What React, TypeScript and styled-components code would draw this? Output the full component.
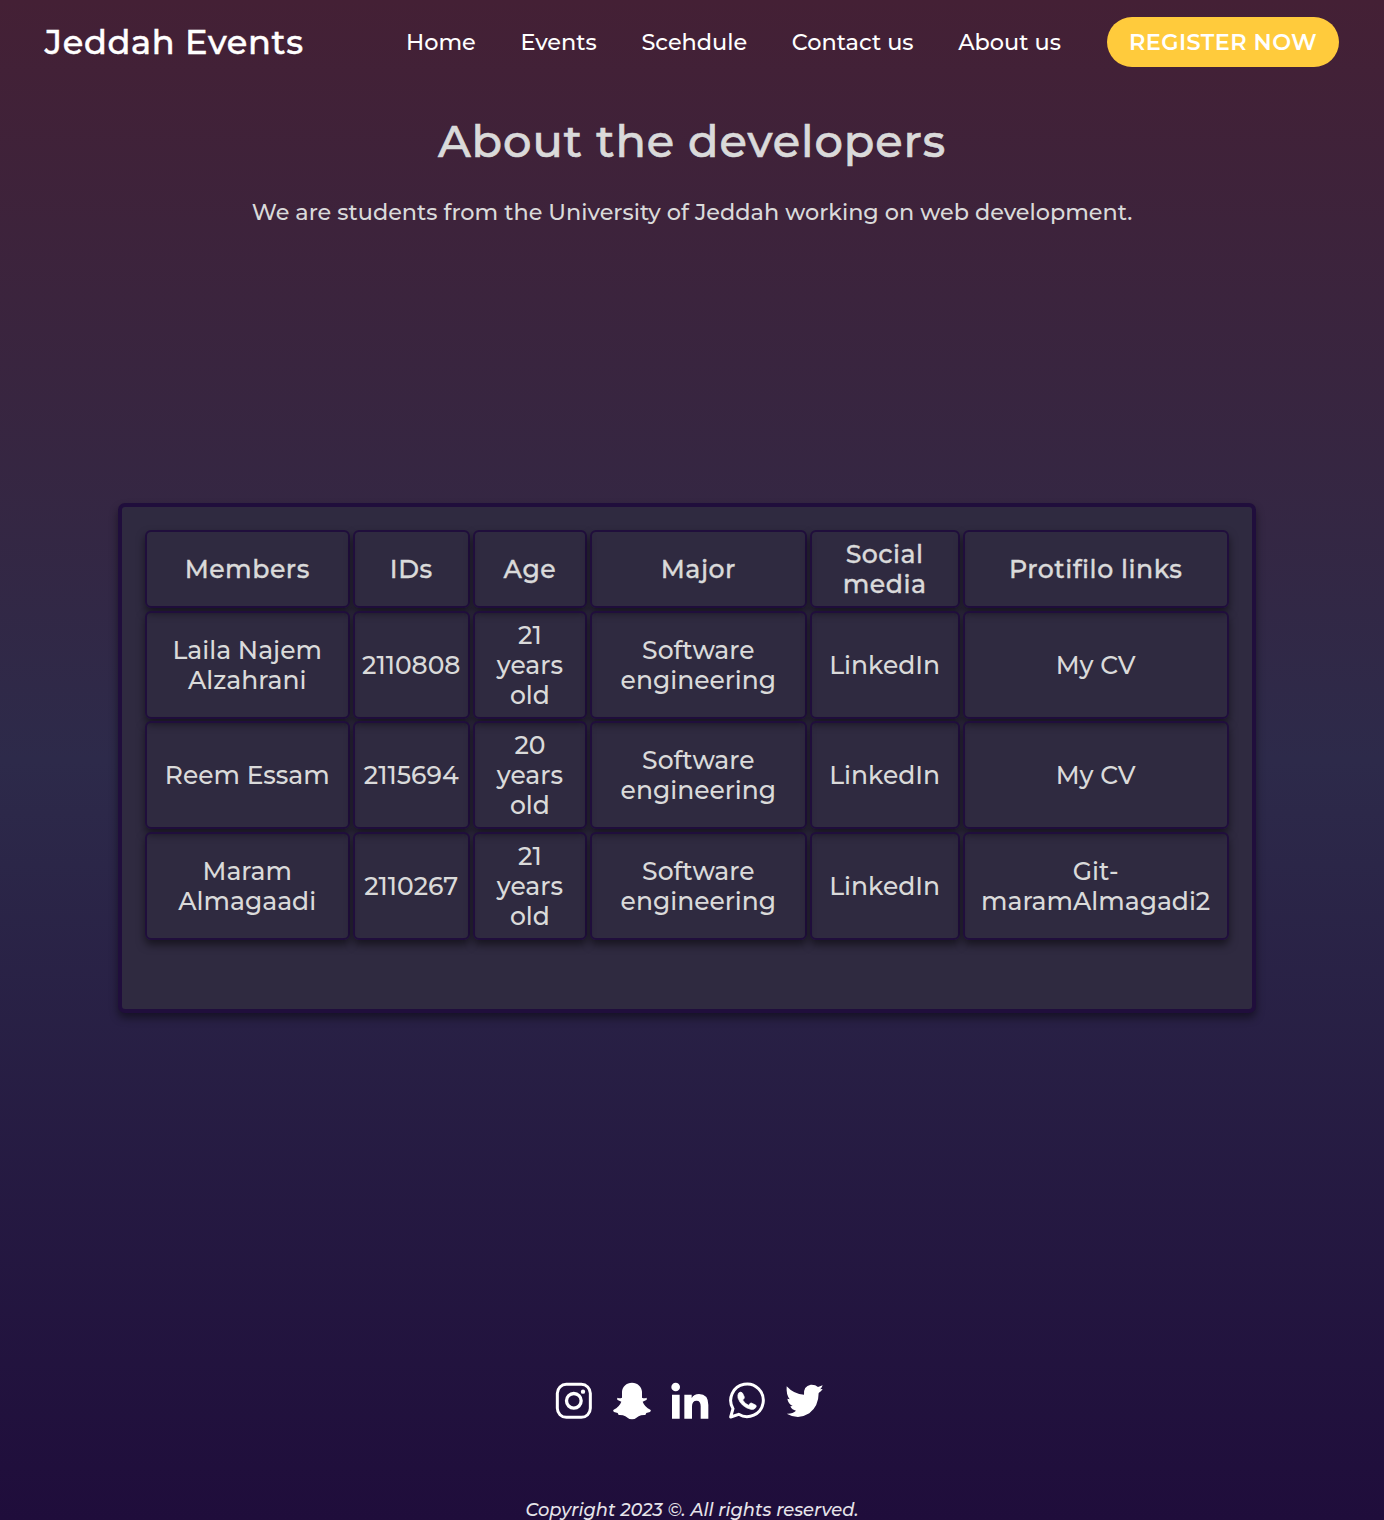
import React from "react";
import styled, { createGlobalStyle, css } from "styled-components";

const GlobalStyle = createGlobalStyle`
  *, *::before, *::after { box-sizing: border-box; }
  body {
    margin: 0;
    overflow: hidden;
    font-family: Montserrat, Inter, "Open Sans", sans-serif;
    font-weight: 500;
    color: #dadada;
    background: #1f0e3c;
  }
`;

/* Heading emphasis: the medium face, thickened a little and tracked out. */
const emphasis = css`
  font-weight: 500;
  letter-spacing: 0.02em;
  -webkit-text-stroke: 0.014em currentColor;
`;

const Page = styled.div`
  display: flex;
  flex-direction: column;
  height: 1520px;
  overflow: hidden;
  background: linear-gradient(180deg, #442035 0%, #2d2a4a 50%, #1f0d3b 100%);
`;

const Header = styled.header`
  display: flex;
  flex: none;
  align-items: center;
  justify-content: space-between;
  height: 84px;
  padding: 0 45px 0 44.8px;
  color: #fff;
`;

const Logo = styled.div`
  ${emphasis}
  font-size: 33.6px;
  line-height: 42px;
`;

const Nav = styled.nav`
  display: flex;
  align-items: center;
  gap: 44.6px;
`;

const NavLink = styled.a`
  font-size: 22.4px;
  line-height: 28px;
`;

const RegisterButton = styled.a`
  display: flex;
  align-items: center;
  justify-content: center;
  width: 232px;
  height: 50px;
  margin-left: 1.5px;
  border-radius: 25px;
  background: #ffcb3c;
  font-size: 22.4px;
  font-weight: 600;
  letter-spacing: 0.02em;
  white-space: nowrap;
`;

const Intro = styled.section`
  display: flex;
  flex: none;
  flex-direction: column;
  align-items: center;
  height: 419px;
  padding-top: 29px;
`;

const Title = styled.h1`
  ${emphasis}
  margin: 0;
  font-size: 44.8px;
  line-height: 56px;
`;

const Subtitle = styled.p`
  margin: 29px 0 0;
  font-size: 22.37px;
  line-height: 28px;
`;

const Card = styled.main`
  flex: none;
  width: 1138px;
  height: 510px;
  margin-left: 118px;
  padding: 23px;
  border: 4px solid #200e3c;
  border-radius: 7px;
  background: #2f2a40;
  box-shadow: 0 5px 8px rgba(0, 0, 0, 0.45);
`;

const Table = styled.div`
  display: grid;
  grid-template-columns: 205px 117px 114.3px 216.5px 150px 266px;
  grid-template-rows: 78px repeat(3, 108px);
  gap: 2.7px 3.04px;
`;

const Cell = styled.div`
  display: flex;
  flex-direction: column;
  align-items: center;
  justify-content: center;
  padding-right: 0.6px;
  border: 2px solid #200e3c;
  border-radius: 6px;
  box-shadow: 0 5px 8px rgba(0, 0, 0, 0.5);
  font-size: 25px;
  line-height: 30px;
`;

const HeadCell = styled(Cell)`
  ${emphasis}
  font-size: 25.2px;
`;

const Footer = styled.footer`
  display: flex;
  flex: none;
  flex-direction: column;
  align-items: center;
  padding-top: 363px;
`;

const Socials = styled.div`
  display: grid;
  grid-template-columns: repeat(5, 57.7px);
  justify-items: center;
  align-items: center;
  height: 50px;
  margin-right: 5px;
  color: #fff;
`;

const Copyright = styled.p`
  margin: 72px 0 0;
  font-size: 17.86px;
  font-style: italic;
  line-height: 24px;
  color: #e6e4ea;
`;

const links = ["Home", "Events", "Scehdule", "Contact us", "About us"];

const headings = [["Members"], ["IDs"], ["Age"], ["Major"], ["Social", "media"], ["Protifilo links"]];

const major = ["Software", "engineering"];

const members = [
  [["Laila Najem", "Alzahrani"], ["2110808"], ["21", "years", "old"], major, ["LinkedIn"], ["My CV"]],
  [["Reem Essam"], ["2115694"], ["20", "years", "old"], major, ["LinkedIn"], ["My CV"]],
  [["Maram", "Almagaadi"], ["2110267"], ["21", "years", "old"], major, ["LinkedIn"], ["Git-", "maramAlmagadi2"]],
];

const Lines = ({ lines }: { lines: string[] }) => (
  <>
    {lines.map((text) => (
      <span key={text}>{text}</span>
    ))}
  </>
);

const InstagramIcon = () => (
  <svg width="50" height="50" viewBox="0 0 150 150" fill="none" stroke="currentColor">
    <rect x="25" y="25" width="99" height="99" rx="27" strokeWidth="9" />
    <circle cx="74.5" cy="74.5" r="22" strokeWidth="10" />
    <circle cx="102" cy="47" r="6.5" fill="currentColor" stroke="none" />
  </svg>
);

const SnapchatIcon = () => (
  <svg width="50" height="50" viewBox="0 0 150 150" fill="currentColor">
    <path d="M75 20C92 20 104 32 105 47L105 65Q112 68 118 65Q122 69 118 72L107 77Q113 93 130 101Q134 104 129 108L118 111L115 117Q103 116 95 121Q85 130 75 130Q65 130 55 121Q47 116 35 117L32 111L21 108Q16 104 20 101Q37 93 43 77L32 72Q28 69 32 65Q38 68 45 65L45 47C46 32 58 20 75 20Z" />
  </svg>
);

const LinkedinIcon = () => (
  <svg width="50" height="50" viewBox="0 0 150 150" fill="currentColor">
    <circle cx="32" cy="33" r="13" />
    <path d="M21 56H44V128H21ZM58 56H80V66Q87 54 102 54Q130 54 130 87V128H107V91Q107 74 95 74Q81 74 81 91V128H58Z" />
  </svg>
);

const WhatsappIcon = () => (
  <svg width="50" height="50" viewBox="0 0 150 150">
    <path
      d="M26 123 L33 98 A48.9 48.9 0 1 1 50 115 Z"
      fill="none"
      stroke="currentColor"
      strokeWidth="9"
      strokeLinejoin="round"
    />
    <path
      d="M50 51q7-6 12 1l5 11q1 4-5 9q7 12 18 16q4-8 8-7l13 6q3 3 1 7q-6 9-16 6Q57 92 48 66q-2-9 2-15z"
      fill="currentColor"
      stroke="currentColor"
      strokeWidth="2"
    />
  </svg>
);

const TwitterIcon = () => (
  <svg width="50" height="50" viewBox="0 0 150 150" fill="currentColor">
    <path d="M20 31Q42 55 72 56Q70 30 92 26Q106 25 114 33L128 28Q125 36 120 40L128 39Q124 46 116 51Q116 90 88 112Q55 133 20 113Q38 114 48 104Q36 102 31 91L38 90Q24 82 22 68L29 70Q18 56 20 31Z" />
  </svg>
);

export default function App() {
  return (
    <Page>
      <GlobalStyle />
      <Header>
        <Logo>Jeddah Events</Logo>
        <Nav>
          {links.map((text) => (
            <NavLink key={text}>{text}</NavLink>
          ))}
          <RegisterButton>REGISTER NOW</RegisterButton>
        </Nav>
      </Header>
      <Intro>
        <Title>About the developers</Title>
        <Subtitle>We are students from the University of Jeddah working on web development.</Subtitle>
      </Intro>
      <Card>
        <Table>
          {headings.map((lines) => (
            <HeadCell key={lines[0]}><Lines lines={lines} /></HeadCell>
          ))}
          {members.map((row, r) =>
            row.map((lines, c) => <Cell key={`${r}-${c}`}><Lines lines={lines} /></Cell>)
          )}
        </Table>
      </Card>
      <Footer>
        <Socials>
          <InstagramIcon />
          <SnapchatIcon />
          <LinkedinIcon />
          <WhatsappIcon />
          <TwitterIcon />
        </Socials>
        <Copyright>Copyright 2023 ©. All rights reserved.</Copyright>
      </Footer>
    </Page>
  );
}
